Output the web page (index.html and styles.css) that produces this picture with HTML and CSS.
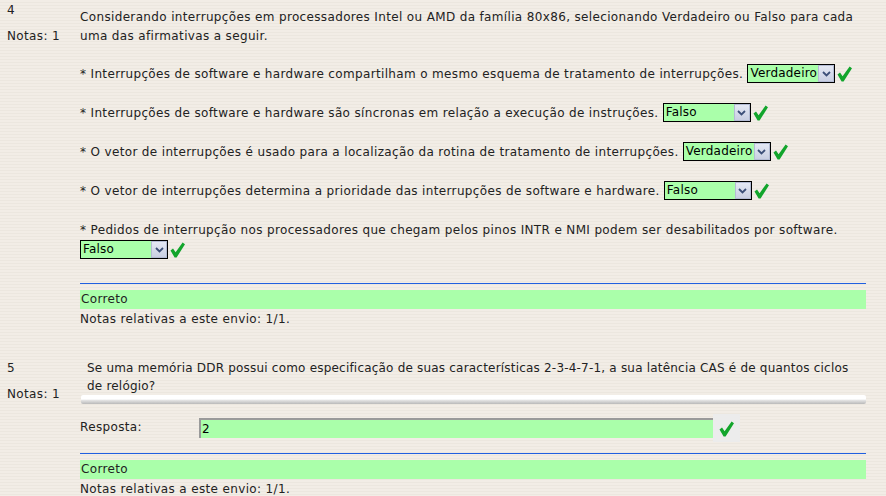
FILE: index.html
```html
<!DOCTYPE html>
<html lang="pt">
<head>
<meta charset="utf-8">
<title>Questionário</title>
<link rel="stylesheet" href="styles.css">
</head>
<body>
<div class="question q4">
  <div class="info">
    <div class="no">4</div>
    <div class="grade">Notas: 1</div>
  </div>
  <div class="content">
    <p class="qtext">Considerando interrupções em processadores Intel ou AMD da família 80x86, selecionando Verdadeiro ou Falso para cada uma das afirmativas a seguir.</p>
    <div class="stmts">
      <p class="stmt">* Interrupções de software e hardware compartilham o mesmo esquema de tratamento de interrupções. <span class="sel"><span class="sel-val">Verdadeiro</span><span class="sel-btn"><svg viewBox="0 0 9 6" width="9" height="6"><path d="M1 1 L4.5 4.5 L8 1" fill="none" stroke="#3c4f78" stroke-width="1.8"/></svg></span></span><svg class="ok" viewBox="0 0 15 16" width="15" height="16"><path d="M0.5 8.5 L3 6.5 L5.6 10.2 L12.6 0.5 L15 2.2 L6.6 15.5 L4.6 15.5 Z" fill="#12a52c"/></svg></p>
      <p class="stmt">* Interrupções de software e hardware são síncronas em relação a execução de instruções. <span class="sel"><span class="sel-val">Falso</span><span class="sel-btn"><svg viewBox="0 0 9 6" width="9" height="6"><path d="M1 1 L4.5 4.5 L8 1" fill="none" stroke="#3c4f78" stroke-width="1.8"/></svg></span></span><svg class="ok" viewBox="0 0 15 16" width="15" height="16"><path d="M0.5 8.5 L3 6.5 L5.6 10.2 L12.6 0.5 L15 2.2 L6.6 15.5 L4.6 15.5 Z" fill="#12a52c"/></svg></p>
      <p class="stmt">* O vetor de interrupções é usado para a localização da rotina de tratamento de interrupções. <span class="sel"><span class="sel-val">Verdadeiro</span><span class="sel-btn"><svg viewBox="0 0 9 6" width="9" height="6"><path d="M1 1 L4.5 4.5 L8 1" fill="none" stroke="#3c4f78" stroke-width="1.8"/></svg></span></span><svg class="ok" viewBox="0 0 15 16" width="15" height="16"><path d="M0.5 8.5 L3 6.5 L5.6 10.2 L12.6 0.5 L15 2.2 L6.6 15.5 L4.6 15.5 Z" fill="#12a52c"/></svg></p>
      <p class="stmt">* O vetor de interrupções determina a prioridade das interrupções de software e hardware. <span class="sel"><span class="sel-val">Falso</span><span class="sel-btn"><svg viewBox="0 0 9 6" width="9" height="6"><path d="M1 1 L4.5 4.5 L8 1" fill="none" stroke="#3c4f78" stroke-width="1.8"/></svg></span></span><svg class="ok" viewBox="0 0 15 16" width="15" height="16"><path d="M0.5 8.5 L3 6.5 L5.6 10.2 L12.6 0.5 L15 2.2 L6.6 15.5 L4.6 15.5 Z" fill="#12a52c"/></svg></p>
      <p class="stmt">* Pedidos de interrupção nos processadores que chegam pelos pinos INTR e NMI podem ser desabilitados por software. <span class="sel"><span class="sel-val">Falso</span><span class="sel-btn"><svg viewBox="0 0 9 6" width="9" height="6"><path d="M1 1 L4.5 4.5 L8 1" fill="none" stroke="#3c4f78" stroke-width="1.8"/></svg></span></span><svg class="ok" viewBox="0 0 15 16" width="15" height="16"><path d="M0.5 8.5 L3 6.5 L5.6 10.2 L12.6 0.5 L15 2.2 L6.6 15.5 L4.6 15.5 Z" fill="#12a52c"/></svg></p>
    </div>
    <div class="feedback">
      <div class="correct">Correto</div>
      <div class="details">Notas relativas a este envio: 1/1.</div>
    </div>
  </div>
</div>

<div class="question q5">
  <div class="info">
    <div class="no">5</div>
    <div class="grade">Notas: 1</div>
  </div>
  <div class="content">
    <p class="qtext">Se uma memória DDR possui como especificação de suas características 2-3-4-7-1, a sua latência CAS é de quantos ciclos de relógio?</p>
    <div class="bar"></div>
    <div class="answer">
      <span class="ans-label">Resposta:</span>
      <span class="ans-input">2</span>
      <span class="ans-mark"><svg class="ok" viewBox="0 0 15 16" width="15" height="16"><path d="M0.5 8.5 L3 6.5 L5.6 10.2 L12.6 0.5 L15 2.2 L6.6 15.5 L4.6 15.5 Z" fill="#12a52c"/></svg></span>
    </div>
    <div class="feedback">
      <div class="correct">Correto</div>
      <div class="details">Notas relativas a este envio: 1/1.</div>
    </div>
  </div>
</div>
</body>
</html>
```

FILE: styles.css
```css
html, body {
  margin: 0;
  padding: 0;
}
body {
  font-family: "DejaVu Sans", Verdana, sans-serif;
  font-size: 12px;
  letter-spacing: 0.35px;
  color: #222;
  background-color: #f0ebe4;
  background-image: repeating-linear-gradient(to bottom, #f2ede6 0px, #f2ede6 2px, #ece7df 2px, #ece7df 3px);
  width: 886px;
  height: 496px;
  overflow: hidden;
}
p { margin: 0; }

.question {
  display: flex;
  align-items: flex-start;
}
.q5 { margin-top: 29px; }

.info {
  width: 73px;
  padding-left: 7px;
  padding-top: 2px;
  flex: none;
}
.info .no { line-height: 16px; }
.info .grade { line-height: 16px; margin-top: 10px; }

.content {
  width: 786px;
  flex: none;
}
.q4 .content { padding-top: 8px; }
.q4 .qtext { line-height: 19px; }

.stmts {
  margin-top: 18px;
  display: flex;
  flex-direction: column;
  gap: 19px;
}
.stmt { line-height: 20px; }

.sel {
  display: inline-flex;
  vertical-align: middle;
  width: 88px;
  height: 19px;
  box-sizing: border-box;
  border: 1px solid #000;
  background: #aaffaa;
  position: relative;
  top: -1px;
  letter-spacing: 0.2px;
}
.sel-val {
  flex: 1;
  padding-left: 2px;
  line-height: 17px;
  color: #000;
}
.sel-btn {
  width: 16px;
  flex: none;
  box-sizing: border-box;
  border: 1px solid #b4bcd4;
  background: linear-gradient(#e4e8f4, #c9cfe2);
  display: flex;
  align-items: center;
  justify-content: center;
}
.sel-btn svg { display: block; }

.ok {
  display: inline-block;
  vertical-align: middle;
  margin-left: 2px;
  position: relative;
  top: -1px;
}

.feedback {
  margin-top: 23px;
  border-top: 1px solid #2060e0;
  padding-top: 6px;
}
.correct {
  background: #aaffaa;
  line-height: 19px;
  padding-left: 1px;
  color: #222;
}
.details { line-height: 20px; }

.q5 .content { padding-top: 1px; }
.q5 .qtext {
  line-height: 18px;
  padding-left: 7px;
  letter-spacing: 0.2px;
}
.bar {
  height: 9px;
  margin-left: 1px;
  background: linear-gradient(#ffffff 0, #ffffff 45%, #e2e2e2 60%, #b9b9b9 100%);
  border-radius: 2px;
}

.answer {
  display: flex;
  align-items: center;
  margin-top: 10px;
  height: 28px;
}
.ans-label {
  width: 119px;
  flex: none;
  margin-top: -2px;
}
.ans-input {
  width: 514px;
  height: 20px;
  box-sizing: border-box;
  border-top: 2px solid #9a9a9a;
  border-left: 2px solid #9a9a9a;
  background: #aaffaa;
  color: #000;
  line-height: 18px;
  padding-left: 1px;
}
.ans-mark {
  width: 27px;
  height: 28px;
  background: #ececec;
  display: flex;
  align-items: center;
  justify-content: center;
}
.ans-mark .ok { margin-left: 0; top: 1px; }
.q5 .feedback { margin-top: 11px; }
```
